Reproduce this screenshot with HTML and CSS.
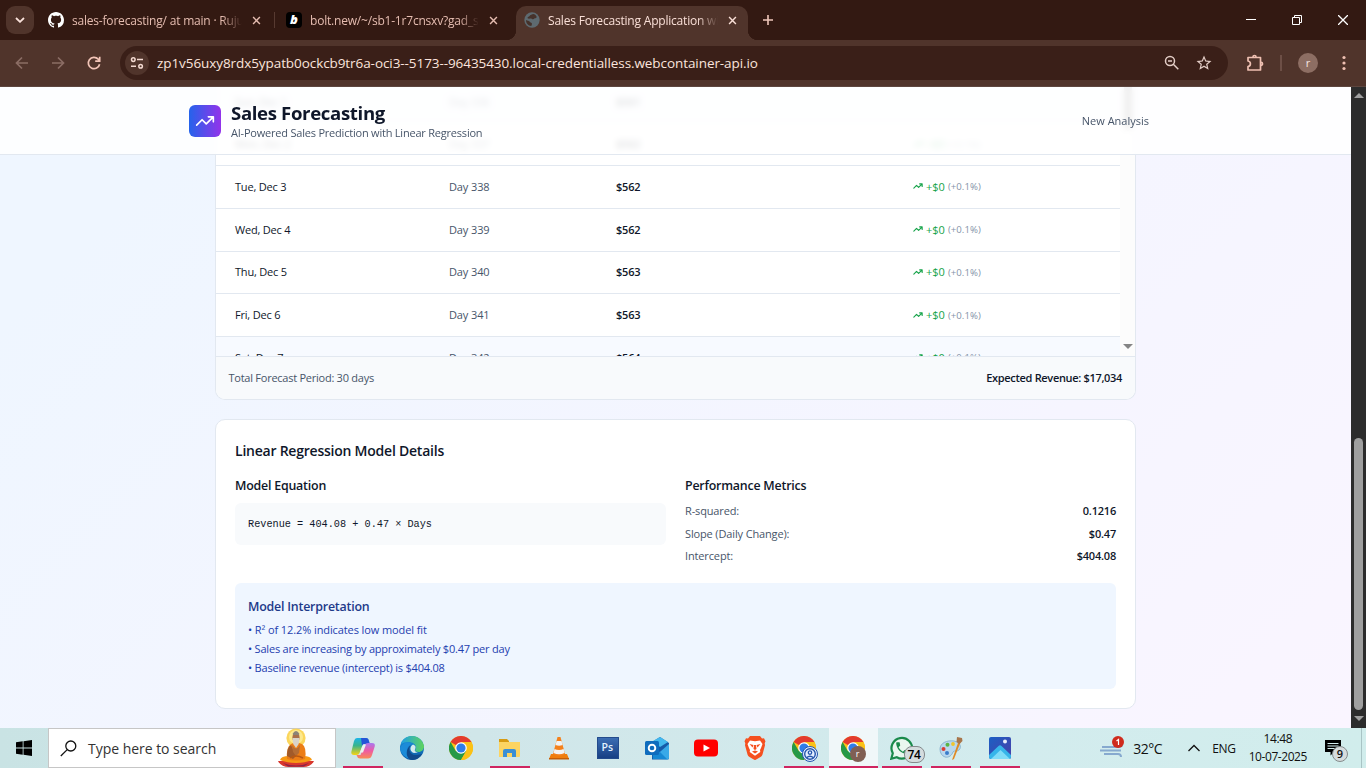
FILE: index.html
```html
<!DOCTYPE html>
<html lang="en">
<head>
<meta charset="utf-8">
<title>Sales Forecasting Application</title>
<link rel="stylesheet" href="styles.css">
</head>
<body>
<svg width="0" height="0" class="defs" aria-hidden="true">
  <defs>
    <linearGradient id="cpA" x1="0" y1="0" x2="0" y2="1"><stop offset="0" stop-color="#1cb4e8"/><stop offset=".45" stop-color="#38b48c"/><stop offset="1" stop-color="#f8d313"/></linearGradient>
    <linearGradient id="cpB" x1="0" y1="0" x2="0" y2="1"><stop offset="0" stop-color="#a878f0"/><stop offset=".5" stop-color="#ee5ba4"/><stop offset="1" stop-color="#fa8a54"/></linearGradient>
    <linearGradient id="edA" x1="0" y1="0" x2="1" y2="0"><stop offset="0" stop-color="#1f9fe4"/><stop offset="1" stop-color="#5fd45b"/></linearGradient>
    <linearGradient id="edB" x1="0" y1="0" x2="0" y2="1"><stop offset="0" stop-color="#1b96e0"/><stop offset="1" stop-color="#0c59a4"/></linearGradient>
    <linearGradient id="psA" x1="0" y1="0" x2="0" y2="1"><stop offset="0" stop-color="#3d6fb5"/><stop offset="1" stop-color="#163e82"/></linearGradient>
    <linearGradient id="phA" x1="0" y1="0" x2="1" y2="1"><stop offset="0" stop-color="#1c5fc4"/><stop offset="1" stop-color="#4a3fa8"/></linearGradient>
    <symbol id="x" viewBox="0 0 10 10"><path d="M1.2 1.2l7.6 7.6M8.800 1.200l-7.600 7.600" fill="none" stroke="currentColor" stroke-width="1.6"/></symbol>
    <symbol id="trend" viewBox="0 0 24 24"><path d="M22 7L13.500 15.500 8.500 10.500 2 17M16 7h6v6" fill="none" stroke="currentColor" stroke-linecap="round" stroke-linejoin="round"/></symbol>
    <symbol id="chrome" viewBox="0 0 24 24">
      <circle cx="12" cy="12" r="12" fill="#fbc116"/>
      <path d="M12 12L1.600 6A12 12 0 0 1 22.400 6z" fill="#e33b2e"/><path d="M12 6h10.400L17 12z" fill="#e33b2e"/>
      <path d="M1.600 6A12 12 0 0 0 12 24l5.200-9L12 12 6.800 15z" fill="#269947"/>
      <path d="M12 24A12 12 0 0 0 22.400 6H12l5.200 9z" fill="#fbc116"/>
      <circle cx="12" cy="12" r="5.800" fill="#fff"/><circle cx="12" cy="12" r="4.600" fill="#2f7de9"/>
    </symbol>
  </defs>
</svg>

<div class="tabstrip">
  <div class="tab-search"><svg width="10" height="6" viewBox="0 0 10 6"><path d="M1 1l4 3.800L9 1" fill="none" stroke="#fbe3dc" stroke-width="1.800"/></svg></div>
  <div class="tab tab-one">
    <svg class="fav" viewBox="0 0 16 16" fill="#fff"><path d="M8 0C3.580 0 0 3.580 0 8c0 3.540 2.290 6.530 5.470 7.590.4.070.550-.170.550-.380 0-.190-.010-.820-.010-1.490-2.010.370-2.530-.490-2.690-.940-.090-.230-.480-.940-.820-1.130-.280-.150-.680-.520-.010-.530.630-.010 1.080.580 1.230.820.720 1.210 1.870.870 2.330.660.070-.520.280-.870.510-1.070-1.780-.2-3.640-.890-3.640-3.950 0-.870.310-1.590.820-2.150-.080-.2-.360-1.020.080-2.120 0 0 .670-.210 2.200.820.640-.180 1.320-.270 2-.270s1.360.090 2 .270c1.530-1.040 2.200-.820 2.200-.820.440 1.100.160 1.920.080 2.120.510.560.820 1.270.820 2.150 0 3.070-1.870 3.750-3.650 3.950.290.250.540.730.540 1.480 0 1.070-.010 1.930-.010 2.200 0 .210.150.460.550.380A8.010 8.010 0 0 0 16 8c0-4.420-3.580-8-8-8z"/></svg>
    <span class="tab-title">sales-forecasting/ at main · Ruju</span>
    <svg class="close"><use href="#x"/></svg>
  </div>
  <i class="tab-sep"></i>
  <div class="tab tab-two">
    <span class="bolt-icon">b</span>
    <span class="tab-title">bolt.new/~/sb1-1r7cnsxv?gad_s</span>
    <svg class="close"><use href="#x"/></svg>
  </div>
  <div class="tab tab-active">
    <svg class="fav globe" viewBox="0 0 24 24"><circle cx="12" cy="12" r="11.500" fill="#5e6a70"/><path d="M14 3c-2 0-3 1.500-5 2 0 2-3 2-4 4 2 2 5 0 7 1.500 1 1 3 .5 4-1 1.500 0 3-1 3-2.500C18 5 16 3 14 3zM3 12c2 1 5 1 6 3 1 1.500 3 1 3 3 0 1-1 2-1 3-5-.5-8-4-8-9z" fill="#46322b"/></svg>
    <span class="tab-title">Sales Forecasting Application with</span>
    <svg class="close"><use href="#x"/></svg>
  </div>
  <svg class="plus" viewBox="0 0 12 12"><path d="M6 1v10M1 6h10" stroke="#efc6ba" stroke-width="1.600"/></svg>
  <div class="winctl">
    <svg width="10" height="10"><path d="M0 4.500h10" stroke="#fff"/></svg>
    <svg width="10" height="10" fill="none" stroke="#fff"><path d="M.5 2.500h7v7h-7zM2.500 2.500v-2h7v7h-2"/></svg>
    <svg width="10" height="10" fill="none" stroke="#fff" stroke-width="1.300"><path d="M0 0l10 10M10 0L0 10"/></svg>
  </div>
</div>

<div class="toolbar">
  <svg class="nav dim" viewBox="0 0 16 16"><path d="M14 8H3M8 2.500L2.500 8 8 13.500"/></svg>
  <svg class="nav dim" viewBox="0 0 16 16"><path d="M2 8h11M8 2.500L13.500 8 8 13.500"/></svg>
  <svg class="nav reload" viewBox="0 0 16 16"><path d="M13.600 9.200A5.700 5.700 0 1 1 12.200 4.100L13.600 5.500M13.700 1.700v4.500H9.200"/></svg>
  <div class="omnibox">
    <span class="site"><svg width="14" height="14" viewBox="0 0 14 14" fill="none" stroke="#f3d9d1" stroke-width="1.500"><circle cx="3.300" cy="3.600" r="1.800"/><path d="M7 3.600h6M1 10.300h5"/><circle cx="10.600" cy="10.300" r="1.800"/></svg></span>
    <span class="url">zp1v56uxy8rdx5ypatb0ockcb9tr6a-oci3--5173--96435430.local-credentialless.webcontainer-api.io</span>
    <svg class="mag" viewBox="0 0 16 16" fill="none" stroke="#e3cdc6" stroke-width="1.500"><circle cx="6" cy="6" r="4.500"/><path d="M9.300 9.300l5 5M4 6h4"/></svg>
    <svg class="star" viewBox="0 0 24 24" fill="#e3cdc6"><path d="M22 9.240l-7.190-.620L12 2 9.190 8.630 2 9.240l5.460 4.730L5.820 21 12 17.270 18.180 21l-1.630-7.030zM12 15.400l-3.760 2.270 1-4.280-3.320-2.880 4.380-.380L12 6.100l1.710 4.040 4.380.380-3.320 2.880 1 4.280z"/></svg>
  </div>
  <svg class="ext" viewBox="0 0 18 18" fill="none" stroke="#efc0b2" stroke-width="1.700" stroke-linejoin="round"><path d="M2 3.500h12.500v12.500H2v-3.500c3.200-.5 3.200-5 0-5.500z"/><path d="M7 3a1.500 1.500 0 0 1 3 0M15 8.300a1.500 1.500 0 0 1 0 3"/></svg>
  <i class="tool-sep"></i>
  <span class="avatar">r</span>
  <svg class="dots" viewBox="0 0 4 16" fill="#efc0b2"><circle cx="2" cy="2.500" r="1.600"/><circle cx="2" cy="8" r="1.600"/><circle cx="2" cy="13.500" r="1.600"/></svg>
</div>

<div class="viewport">
  <div class="page">
    <header class="app-header">
      <div class="logo"><svg><use href="#trend"/></svg></div>
      <div class="brand"><h1>Sales Forecasting</h1><p>AI-Powered Sales Prediction with Linear Regression</p></div>
      <a class="new">New Analysis</a>
    </header>
    <main>
      <section class="card forecast">
        <div class="scroller">
          <div class="rows">
            <div class="row weekend"><span>Sun, Dec 1</span><span class="day">Day 336</span><b>$561</b><span></span></div>
            <div class="row"><span>Mon, Dec 2</span><span class="day">Day 337</span><b>$562</b><span class="chg"><svg><use href="#trend"/></svg><em>+$0</em><small>(+0.1%)</small></span></div>
            <div class="row"><span>Tue, Dec 3</span><span class="day">Day 338</span><b>$562</b><span class="chg"><svg><use href="#trend"/></svg><em>+$0</em><small>(+0.1%)</small></span></div>
            <div class="row"><span>Wed, Dec 4</span><span class="day">Day 339</span><b>$562</b><span class="chg"><svg><use href="#trend"/></svg><em>+$0</em><small>(+0.1%)</small></span></div>
            <div class="row"><span>Thu, Dec 5</span><span class="day">Day 340</span><b>$563</b><span class="chg"><svg><use href="#trend"/></svg><em>+$0</em><small>(+0.1%)</small></span></div>
            <div class="row"><span>Fri, Dec 6</span><span class="day">Day 341</span><b>$563</b><span class="chg"><svg><use href="#trend"/></svg><em>+$0</em><small>(+0.1%)</small></span></div>
            <div class="row weekend"><span>Sat, Dec 7</span><span class="day">Day 342</span><b>$564</b><span class="chg"><svg><use href="#trend"/></svg><em>+$0</em><small>(+0.1%)</small></span></div>
          </div>
          <div class="inner-bar"><i class="inner-thumb"></i><i class="inner-down"></i></div>
        </div>
        <div class="total"><span>Total Forecast Period: 30 days</span><b>Expected Revenue: $17,034</b></div>
      </section>
      <section class="card details">
        <h3>Linear Regression Model Details</h3>
        <div class="cols">
          <div><h4>Model Equation</h4><div class="equation">Revenue = 404.08 + 0.47 × Days</div></div>
          <div><h4>Performance Metrics</h4>
            <dl>
              <div><dt>R-squared:</dt><dd>0.1216</dd></div>
              <div><dt>Slope (Daily Change):</dt><dd>$0.47</dd></div>
              <div><dt>Intercept:</dt><dd>$404.08</dd></div>
            </dl>
          </div>
        </div>
        <div class="interp">
          <h4>Model Interpretation</h4>
          <p class="first">• R² of 12.2% indicates low model fit</p>
          <p>• Sales are increasing by approximately $0.47 per day</p>
          <p>• Baseline revenue (intercept) is $404.08</p>
        </div>
      </section>
    </main>
  </div>
  <div class="scrollbar"><i class="up"></i><i class="thumb"></i><i class="down"></i></div>
</div>

<div class="taskbar">
  <div class="start"><svg width="16" height="16" viewBox="0 0 16 16"><path d="M0 2.300L6.700 1.300v6.300H0zM7.500 1.200L16 0v7.600H7.500zM0 8.400h6.700v6.300L0 13.700zM7.500 8.400H16V16l-8.500-1.200z"/></svg></div>
  <div class="search">
    <svg width="17" height="17" viewBox="0 0 17 17" fill="none" stroke="#111" stroke-width="1.300"><circle cx="10.800" cy="6" r="5"/><path d="M7.200 9.600L.8 16"/></svg>
    <span>Type here to search</span>
    <svg class="sage" width="38" height="40" viewBox="0 0 38 40">
      <circle cx="19" cy="10" r="9.600" fill="#fbd65c"/><circle cx="19" cy="9" r="7" fill="#fde98f"/>
      <path d="M1 33q7 0 10-2h16q3 2 10 2-3 6-11 6H12Q4 39 1 33z" fill="#d8382e"/><path d="M6 35q13 5 26 0l-5 3.500H11z" fill="#8f2348"/>
      <path d="M3 32q1-4 9-4h14q8 0 9 4-7 3-16 3T3 32z" fill="#f79a14"/>
      <path d="M10 31q-1-12 4-15l5-2 6 2q5 3 3 15-9 3-18 0z" fill="#ec7d16"/><path d="M10 28q0-9 4-11l5 11-3 3z" fill="#a15a2a"/>
      <path d="M15 17q4 7 8 0l-1 8-3 3-3-4z" fill="#b46c34"/><path d="M13 30q6-4 13 0" stroke="#b85812" fill="none" stroke-width="1.500"/>
      <ellipse cx="19" cy="9.500" rx="3.600" ry="5" fill="#a96f4b"/><path d="M15.500 6q3.500-6 7 0l-1 1h-5z" fill="#8c8378"/><path d="M15.500 10h7l-.8 6L19 20l-2.800-4z" fill="#d9d3c9"/>
    </svg>
  </div>
  <div class="apps">
    <div class="app open"><svg viewBox="0 0 24 24"><path d="M6 2h9q2 0 2.500 2L16 8h-4L8.500 17q-.7 2-3 2H3q-3 0-2.700-3L3 5q.8-3 3-3z" fill="url(#cpA)"/><path d="M10 2h5q2.500 0 3 3l1 3h-5q-2 0-3 2z" fill="#2455d6"/><path d="M17 7h4q3.500 0 2.700 3.500L21 19q-1 3.500-4 3.500H9q-2.500 0-3-2.500l-.5-1h4l4-10q1-2 3.500-2z" fill="url(#cpB)"/><path d="M12 8.500h3L12 16.500H9z" fill="#eaf3ef"/></svg></div>
    <div class="app"><svg viewBox="0 0 24 24"><circle cx="12" cy="12" r="12" fill="url(#edB)"/><path d="M1 8C4-3 21-3 24 10c0 5-4 7-8 5.500-2-1 0-2 0-4C16 6 7 4 1 8z" fill="url(#edA)"/><path d="M0 12C2 7 8 5 12 8c-5 1-7 9-1 15A12 12 0 0 1 0 12z" fill="#1c8bd8"/><path d="M11 9c-4 5 0 11 6 10l5-1c-3 5-8 7-12 5.500C5 20 6 12 11 9z" fill="#114a8b"/><path d="M13 8.500c3 1 3 3 2 5-1 1 .5 2.500 3 3l-4 .5c-4-1-5-6-1-8.500z" fill="#d3ebed"/></svg></div>
    <div class="app"><svg><use href="#chrome"/></svg></div>
    <div class="app open"><svg viewBox="0 0 24 24"><path d="M1 3h8l2 2v5H1z" fill="#d79b12"/><path d="M1 6h21v14q0 1-1 1H1z" fill="#fcd462"/><path d="M5 21v-6q0-2 2-2h9q2 0 2 2v6h-4v-4h-5v4z" fill="#3a8fd6"/></svg></div>
    <div class="app"><svg viewBox="0 0 24 24"><path d="M4 18h16l2 5H2z" fill="#ef7d0c"/><path d="M10.500 1h3L18 18q-6 4-12 0z" fill="#f4811b"/><path d="M9.600 5h4.900l1.100 4q-3.500 1.500-7.100 0zM7.500 13q4.500 2 9.100 0l1 4q-5.500 2.500-11.100 0z" fill="#f3f3f3"/><path d="M2 22h20v1.500H2z" fill="#c55c05"/></svg></div>
    <div class="app"><svg viewBox="0 0 24 24"><path d="M1 1h22v22H1z" fill="url(#psA)"/><path d="M1.500 1.500h21v21h-21z" fill="none" stroke="#234b8c"/><text x="5.500" y="14.500" font-size="10.500" font-weight="600" fill="#e3f2ff">Ps</text></svg></div>
    <div class="app"><svg viewBox="0 0 24 24"><path d="M7 6l8-5 9 6v15q0 1.500-2 1.500H7z" fill="#155aa8"/><path d="M8 5l7-4 8 5-8 5z" fill="#43b8ee"/><path d="M24 8v14q0 2-3 1.500L8 22l8-7z" fill="#39a9e8"/><path d="M7 12l8 4 7 7H8z" fill="#1688d4"/><rect x="0" y="5" width="14" height="14" rx="1.500" fill="#0f6cbd"/><circle cx="7" cy="12" r="3.300" fill="none" stroke="#fff" stroke-width="1.900"/></svg></div>
    <div class="app"><svg viewBox="0 0 24 24"><rect y="3.500" width="24" height="17" rx="4" fill="#f00"/><path d="M9.500 8.500v7l6.500-3.500z" fill="#fff"/></svg></div>
    <div class="app"><svg viewBox="0 0 24 24"><path d="M7 0h10l2 2.500 2-.2 1.500 3-.8 2 .3 2-2.500 9.200q-.5 1.500-2 2.500L12 24.200 6.500 21q-1.500-1-2-2.500L2 9.300l.3-2-.8-2 1.500-3 2 .2z" fill="#f5501f"/><path d="M7 4.500l5 .8 5-.8 2.500 3.500-1.500 4-1 2 .3 2L12 19.700 6.700 16l.3-2-1-2-1.500-4z" fill="#fff"/><path d="M6.500 8l4 1-1 2.500zM17.500 8l-4 1 1 2.500zM11 9h2l.5 4-1.500 1-1.500-1zM9 15.500l3-1 3 1-3 2z" fill="#f5501f"/></svg></div>
    <div class="app open"><svg><use href="#chrome"/></svg><svg class="person" viewBox="0 0 16 16"><circle cx="8" cy="8" r="7.500" fill="#e4efff" stroke="#2455ad"/><circle cx="8" cy="8" r="5.300" fill="none" stroke="#2455ad" stroke-width="1.400"/><circle cx="8" cy="6.600" r="1.700" fill="none" stroke="#2455ad" stroke-width="1.300"/><path d="M4.500 11.700q3.500-3 7 0" fill="none" stroke="#2455ad" stroke-width="1.400"/></svg></div>
    <div class="app open current"><svg><use href="#chrome"/></svg><span class="mini">r</span></div>
    <div class="app open"><svg viewBox="0 0 24 24"><path d="M1.300 22.700l1.500-5.500A10.300 10.300 0 1 1 6.800 21.200z" fill="#e9f7ef" stroke="#1a8a4b" stroke-width="2.200"/><path transform="translate(4.200 4.200) scale(.66)" d="M6.620 10.790c1.440 2.830 3.760 5.140 6.590 6.590l2.200-2.200c.270-.270.670-.360 1.020-.240 1.120.370 2.330.570 3.570.570.550 0 1 .450 1 1V20c0 .550-.450 1-1 1-9.390 0-17-7.610-17-17 0-.550.450-1 1-1h3.500c.550 0 1 .450 1 1 0 1.250.2 2.450.570 3.570.110.350.030.740-.250 1.020z" fill="#1a8a4b"/></svg><span class="count">74</span></div>
    <div class="app open"><svg viewBox="0 0 24 24"><path d="M1 13C1 7 8 4 15 5c6 1 8 6 5 9-2 2-5 0-6 2-1 3-4 6-8 5-3-1-5-4-5-8z" fill="#b9d8ee" stroke="#7eabc9" stroke-width=".8"/><circle cx="4.500" cy="13" r="2" fill="#d93d35"/><circle cx="8.500" cy="8.700" r="2" fill="#5bb546"/><circle cx="14" cy="8" r="1.900" fill="#f0c52d"/><circle cx="8" cy="17" r="2" fill="#3b7cc9"/><path d="M20 4l2 1-7 18-2 1z" fill="#e08a25"/><path d="M18 1l5 1 .5 3-3 3-3-2z" fill="#a8764b"/></svg></div>
    <div class="app open"><svg viewBox="0 0 24 24"><rect x="1" y="1" width="22" height="22" rx="2" fill="url(#phA)"/><path d="M1 19l9.500-9q1.500-1.500 3 0L23 19v2q0 2-2 2H3q-2 0-2-2z" fill="#36b5ea"/><path d="M3 23l9.500-9L22 23z" fill="#7fdcf8"/><circle cx="17" cy="5.500" r="2" fill="#e9eefb"/></svg></div>
  </div>
  <div class="tray">
    <svg width="26" height="24" viewBox="0 0 26 24"><path d="M2 11h17q4 0 3-4M0 14.500h21M4 18h14q3 0 3 3" fill="none" stroke="#86a9cf" stroke-width="2"/><circle cx="18" cy="6" r="6" fill="#cf2b1d"/><path d="M16.500 5l2-1.500v5.500" fill="none" stroke="#fff" stroke-width="1.200"/></svg>
    <span class="temp">32°C</span>
    <svg width="12" height="8" viewBox="0 0 12 8"><path d="M.5 7L6 1.500 11.500 7" fill="none" stroke="#111" stroke-width="1.300"/></svg>
    <span class="eng">ENG</span>
    <div class="clock"><span>14:48</span><span>10-07-2025</span></div>
    <div class="notif"><svg width="16" height="16" viewBox="0 0 16 16"><path d="M0 0h16v12h-7l-3.500 3.500V12H0z"/><path d="M2.500 3.500h11M2.500 6h11M2.500 8.500h7" stroke="#d3eced"/></svg><span class="nine">9</span></div>
    <i class="peek"></i>
  </div>
</div>
</body>
</html>
```
FILE: styles.css
```css
* { box-sizing: border-box; }
html, body { margin: 0; height: 768px; overflow: hidden; }
body { display: grid; grid-template-rows: 40px 47px 641px 40px; font-family: "Open Sans", "Noto Sans", sans-serif; width: 1366px; white-space: nowrap; }
.defs { position: absolute; }
svg { display: block; flex: none; }
i { flex: none; }
h1, h3, h4, p, dl, dd { margin: 0; }

/* Tab strip */
.tabstrip { background: #331912; display: flex; align-items: center; padding-left: 6px; color: #e5bcb0; font-size: 12px; }
.tab-search { width: 28px; height: 28px; border-radius: 9px; background: #50342b; display: grid; place-items: center; }
.tab { display: flex; align-items: center; height: 34px; }
.fav { width: 16px; height: 16px; }
.tab-title { flex: 1; overflow: hidden; margin: 0 10px 0 8px; letter-spacing: -.200px; mask-image: linear-gradient(90deg, #000 88%, transparent); }
.close { width: 9px; height: 9px; }
.tab-one { width: 212.500px; margin-left: 14px; }
.tab-sep { width: 1.500px; height: 16px; background: #573a31; margin: 0 11px 0 13px; }
.tab-two { width: 212px; }
.bolt-icon { width: 16px; height: 16px; border-radius: 4px; background: #000; color: #fff; font: italic 800 13px/15px "Open Sans", sans-serif; text-align: center; flex: none; }
.tab-active { position: relative; width: 232px; margin: 6px 0 0 18px; padding: 0 11px 6px 8px; background: #50342b; color: #f9dfd7; border-radius: 10px 10px 0 0; }
.tab-active::before, .tab-active::after { content: ""; position: absolute; bottom: 0; width: 10px; height: 10px; }
.tab-active::before { left: -10px; background: radial-gradient(circle at 0 0, #331912 10px, #50342b 10.500px); }
.tab-active::after { right: -10px; background: radial-gradient(circle at 100% 0, #331912 10px, #50342b 10.500px); }
.plus { width: 12px; height: 12px; margin-left: 14px; }
.winctl { display: flex; gap: 36px; margin-left: auto; padding-right: 18px; }

/* Toolbar */
.toolbar { background: linear-gradient(#50342b 46px, #5d463f 46px); display: flex; align-items: center; padding: 0 20px 1px 14px; }
.nav { width: 16px; height: 16px; fill: none; stroke: #f3c5b8; stroke-width: 1.700; margin-right: 20px; }
.dim { stroke: #8b6d64; }
.reload { margin-right: 18px; }
.omnibox { width: 1108px; height: 34px; border-radius: 17px; background: #3a1f18; display: flex; align-items: center; padding-left: 5px; }
.site { width: 24px; height: 24px; border-radius: 50%; background: #50342b; display: grid; place-items: center; }
.url { flex: 1; margin-left: 8px; color: #fbe4dd; font-size: 13.500px; letter-spacing: -.075px; }
.mag { width: 16px; height: 16px; margin-right: 15px; }
.star { width: 18px; height: 18px; margin-right: 15px; }
.ext { width: 18px; height: 18px; margin-left: 18px; }
.tool-sep { width: 2px; height: 16px; background: #6d4f46; margin: 0 16px; }
.avatar { width: 20px; height: 20px; border-radius: 50%; background: #8d6e63; color: #f5e6e1; font-size: 11px; line-height: 19px; text-align: center; }
.dots { width: 4px; height: 16px; margin-left: auto; }

/* Page */
.viewport { display: flex; overflow: hidden; }
.page { position: relative; width: 1351px; overflow: hidden; background: linear-gradient(135deg, #eff6ff 12%, #f6f5ff 70%, #faf5ff); }
.app-header { position: absolute; inset: 0 0 auto 0; z-index: 2; height: 68px; padding: 0 202px 0 189px; display: flex; align-items: center; background: rgba(255, 255, 255, .86); backdrop-filter: blur(3.200px); border-bottom: 1px solid #e2e8f0; }
.logo { width: 32px; height: 32px; border-radius: 6px; background: linear-gradient(90deg, #2563eb, #9333ea); color: #fff; display: grid; place-items: center; }
.logo svg { width: 20px; height: 20px; stroke-width: 2; }
.brand { margin-left: 10px; padding-top: 2px; }
.brand h1 { font-size: 18.600px; line-height: 22px; font-weight: 700; color: #0f172a; letter-spacing: -.350px; }
.brand p { font-size: 11px; line-height: 17px; color: #475569; letter-spacing: -.210px; }
.new { margin-left: auto; font-size: 11px; font-weight: 500; color: #475569; }
main { padding: 0 215px; }
.card { width: 921px; border: 1px solid #e2e8f0; border-radius: 10px; background: #fff; overflow: hidden; }
.forecast { border-top: 0; border-radius: 0 0 10px 10px; height: 313px; font-size: 11px; letter-spacing: -.200px; }
.scroller { height: 269px; display: flex; overflow: hidden; }
.rows { width: 904px; margin-top: -7.100px; }
.row { height: 42.680px; border-top: 1px solid #e2e8f0; display: grid; grid-template-columns: 214px 167px 297px 1fr; align-items: center; padding: 0 0 1.200px 19px; color: #0f172a; }
.weekend { background: #f7faff; }
.day { color: #475569; letter-spacing: -.120px; }
.row b { font-weight: 600; }
.chg { display: flex; align-items: center; color: #16a34a; }
.chg svg { width: 10px; height: 10px; margin-right: 3px; stroke-width: 2.700; }
.chg em { font-style: normal; font-weight: 500; letter-spacing: 0; }
.chg small { font-size: 9.600px; margin-left: 3px; color: #8593a9; letter-spacing: .060px; padding-top: 1px; }
.inner-bar { width: 15px; background: #fcfcfc; display: flex; flex-direction: column; align-items: center; justify-content: space-between; padding: 0 0 7px 0; }
.inner-thumb { width: 8px; height: 42px; border-radius: 0 0 4px 4px; background: #8b8b8b; }
.inner-down { border: 5px solid transparent; border-top-color: #858585; border-bottom: 0; }
.total { height: 43px; background: #f8fafc; border-top: 1px solid #e2e8f0; display: flex; align-items: center; justify-content: space-between; padding: 0 13px 2px 12.500px; color: #475569; letter-spacing: -.250px; }
.total b { font-weight: 600; color: #0f172a; letter-spacing: -.320px; }
.details { margin-top: 19px; height: 290px; padding: 19px; }
h3 { font-size: 14px; line-height: 24px; font-weight: 600; color: #0f172a; letter-spacing: -.230px; }
h4 { font-size: 12.400px; line-height: 20px; font-weight: 600; color: #0f172a; letter-spacing: -.210px; }
.cols { display: grid; grid-template-columns: 431px 431px; gap: 19px; margin-top: 13px; }
.equation { margin-top: 7px; height: 42px; border-radius: 6px; background: #f8fafc; padding-left: 13px; font: 10.220px/42.500px "Liberation Mono", monospace; color: #0f172a; }
dl { margin-top: 4px; font-size: 11px; letter-spacing: -.140px; }
dl div { display: flex; justify-content: space-between; height: 22.500px; line-height: 22.500px; }
dt { color: #475569; }
dd { font-weight: 600; color: #0f172a; letter-spacing: -.200px; }
.interp { margin-top: 15.500px; height: 106px; border-radius: 6px; background: #eff6ff; padding: 14px 13px 0; color: #1e40af; }
.interp h4 { color: #1e3a8a; margin-bottom: 3px; }
.interp p { font-size: 11px; line-height: 19.200px; letter-spacing: -.200px; }
.interp .first { letter-spacing: -.100px; }

.scrollbar { width: 15px; background: #2c2c2c; display: flex; flex-direction: column; align-items: center; padding: 6px 0 7px; }
.up, .down { border: 5px solid transparent; }
.up { border-bottom-color: #9f9f9f; border-top: 0; }
.down { border-top-color: #9f9f9f; border-bottom: 0; margin-top: 6px; }
.thumb { width: 9px; height: 272px; border-radius: 5px; background: #9f9f9f; margin-top: auto; }

/* Taskbar */
.taskbar { display: flex; background: linear-gradient(90deg, #c9e3e4, #d0e6e9 35%, #d3ecee 75%, #d1edec); color: #111; }
.start { width: 48px; display: grid; place-items: center; }
.search { width: 288px; background: #fff; border: 1px solid #c6c6c6; display: flex; align-items: center; padding-left: 11px; font-size: 14px; color: #333; }
.search span { margin-left: 11px; letter-spacing: -.030px; }
.sage { margin-left: auto; margin-right: 20px; }
.apps { display: flex; margin-left: 2.500px; }
.app { width: 49px; position: relative; display: grid; place-items: center; }
.app > svg { width: 24px; height: 24px; }
.open::after { content: ""; position: absolute; left: 4.500px; right: 4.500px; bottom: 0; height: 2px; background: #cf2560; }
.current { background: #f0f7f9; }
.current::after { left: 0; right: 0; }
.app > .person { position: absolute; width: 16px; height: 16px; left: 22px; top: 18px; }
.mini { position: absolute; left: 21px; top: 18px; width: 16px; height: 16px; border-radius: 50%; background: #805f54; color: #fff; font-size: 9px; line-height: 15px; text-align: center; }
.count { position: absolute; left: 26px; top: 18px; width: 21px; height: 17px; border: 1px solid #84898b; border-radius: 8px; background: #d5dcde; font-size: 12px; font-weight: 600; line-height: 15px; text-align: center; letter-spacing: -.400px; color: #000; }
.tray { margin-left: auto; display: flex; align-items: center; font-size: 12px; }
.temp { font-size: 14px; margin: 0 26px 0 7px; letter-spacing: -.500px; }
.eng { margin: 0 13px 0 12px; letter-spacing: -.300px; }
.clock { display: flex; flex-direction: column; align-items: center; line-height: 18px; letter-spacing: -.430px; }
.notif { position: relative; margin-left: 18px; }
.nine { position: absolute; left: 7px; top: 6px; width: 16px; height: 16px; border-radius: 50%; background: #d6dcdd; border: 1px solid #858b8c; font-size: 11px; font-weight: 600; line-height: 14px; text-align: center; }
.peek { width: 5px; height: 40px; margin-left: 20px; border-left: 1px solid #a9c4c5; }
```
